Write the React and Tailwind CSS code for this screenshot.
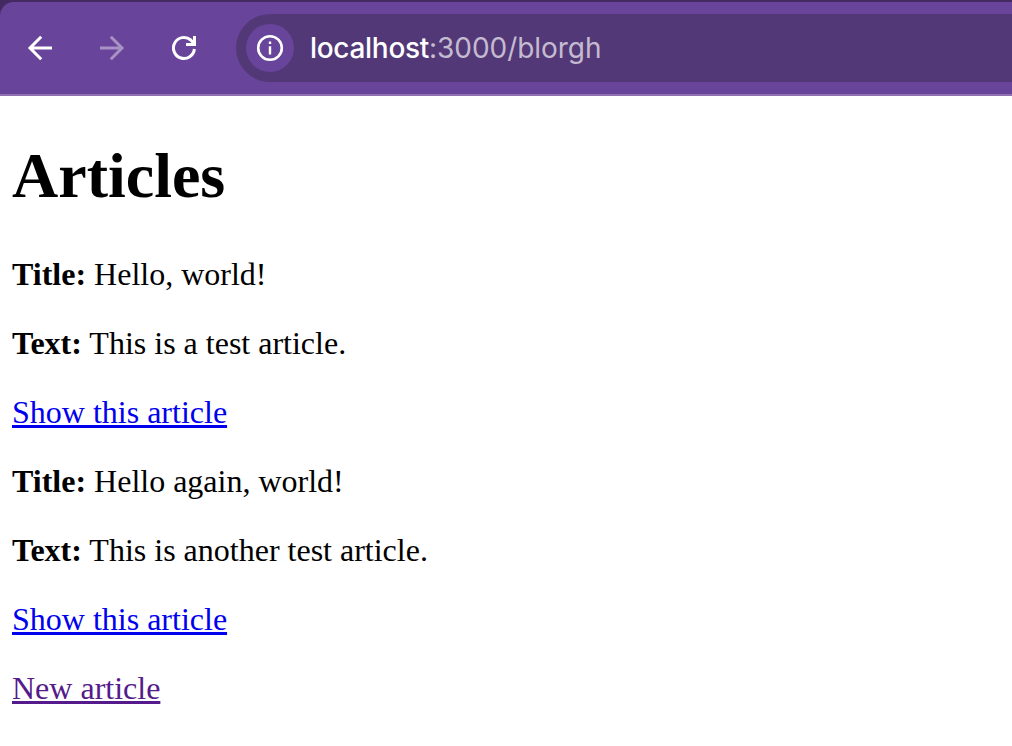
const articles = [
  { title: "Hello, world!", text: "This is a test article." },
  { title: "Hello again, world!", text: "This is another test article." },
];

function BackIcon() {
  return (
    <svg width="32" height="32" viewBox="0 0 32 32" fill="none" stroke="currentColor" strokeWidth="3">
      <path d="M28 16H6M17.2 4.8 6 16l11.2 11.2" />
    </svg>
  );
}

function ForwardIcon() {
  return (
    <svg width="32" height="32" viewBox="0 0 32 32" fill="none" stroke="currentColor" strokeWidth="3">
      <path d="M4 16h22M14.8 4.8 26 16 14.8 27.2" />
    </svg>
  );
}

function ReloadIcon() {
  return (
    <svg width="32" height="32" viewBox="0 0 32 32" fill="none" stroke="currentColor" strokeWidth="3">
      <path d="M26.4 17A10.5 10.5 0 1 1 22.8 8L26 11.6" />
      <path d="M26.5 4v8.5H18" />
    </svg>
  );
}

function InfoIcon() {
  return (
    <svg width="28" height="28" viewBox="0 0 28 28" fill="none" stroke="currentColor" strokeWidth="2.6">
      <circle cx="14" cy="14" r="11.8" />
      <path d="M14 12.3v8.1M14 7.5v2.6" strokeWidth="2.4" />
    </svg>
  );
}

function Toolbar() {
  return (
    <header className="bg-[#432a62] pt-[2px]">
      <div className="flex h-[94px] items-center rounded-tl-[14px] border-b-2 border-[#9070b3] bg-[#68449a] pl-6 text-white">
        <button className="mr-10"><BackIcon /></button>
        <button className="mr-10 text-[#a892c5]"><ForwardIcon /></button>
        <button className="mr-9"><ReloadIcon /></button>
        <div className="flex h-[68px] flex-1 items-center rounded-l-full bg-[#523877] pl-[10px]">
          <span className="flex size-12 items-center justify-center rounded-full bg-[#68449a]">
            <InfoIcon />
          </span>
          <span className="ml-4 whitespace-nowrap font-['Inter',sans-serif] text-[28px] leading-9 tracking-[-0.05px] text-[#c5bbd0]">
            <span className="font-medium tracking-[-0.3px] text-white">localhost</span>:3000/blorgh
          </span>
        </div>
      </div>
    </header>
  );
}

export default function App() {
  return (
    <div className="h-[746px] overflow-hidden bg-white">
      <Toolbar />
      <main className="flex flex-col gap-8 px-3 pt-[43px] font-['Liberation_Serif',serif] text-[32px] leading-[37px] text-black">
        <h1 className="mb-[11px] text-[64px] font-bold leading-[74px]">Articles</h1>
        {articles.map((article) => (
          <article key={article.title} className="flex flex-col gap-8">
            <p><strong>Title:</strong> {article.title}</p>
            <p><strong>Text:</strong> {article.text}</p>
            <p>
              <a href="#" className="text-[#0000ee] underline decoration-[3px] underline-offset-[2px]">Show this article</a>
            </p>
          </article>
        ))}
        <p>
          <a href="#" className="text-[#551a8b] underline decoration-[3px] underline-offset-[2px]">New article</a>
        </p>
      </main>
    </div>
  );
}
